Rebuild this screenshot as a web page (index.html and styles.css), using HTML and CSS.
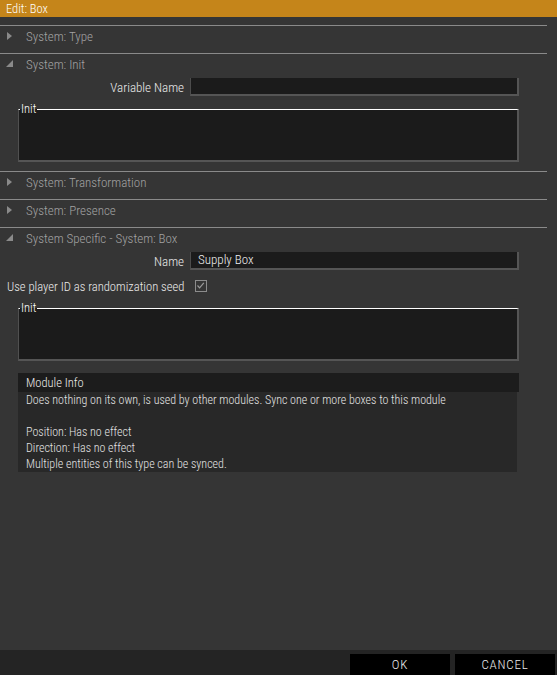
FILE: index.html
```html
<!DOCTYPE html>
<html>
<head>
<meta charset="utf-8">
<link rel="stylesheet" href="styles.css">
</head>
<body>
<div class="dialog">
  <div class="titlebar">Edit: Box</div>
  <div class="content">
    <section class="section">
      <div class="sec-head"><span class="tri tri-closed"></span><span class="sec-title">System: Type</span></div>
    </section>
    <section class="section">
      <div class="sec-head"><span class="tri tri-open"></span><span class="sec-title">System: Init</span></div>
      <div class="field-row">
        <label class="field-label">Variable Name</label>
        <div class="input"></div>
      </div>
      <fieldset class="codebox"><legend>Init</legend><div class="codebox-inner"></div></fieldset>
    </section>
    <section class="section">
      <div class="sec-head"><span class="tri tri-closed"></span><span class="sec-title">System: Transformation</span></div>
    </section>
    <section class="section">
      <div class="sec-head"><span class="tri tri-closed"></span><span class="sec-title">System: Presence</span></div>
    </section>
    <section class="section section-last">
      <div class="sec-head"><span class="tri tri-open"></span><span class="sec-title">System Specific - System: Box</span></div>
      <div class="field-row">
        <label class="field-label">Name</label>
        <div class="input">Supply Box</div>
      </div>
      <div class="check-row">
        <label class="check-label">Use player ID as randomization seed</label>
        <span class="checkbox"><svg width="11" height="11" viewBox="0 0 11 11"><path d="M2.5 5.5 L4.6 7.8 L8.8 2.8" fill="none" stroke="#9a9a9a" stroke-width="1.2"/></svg></span>
      </div>
      <fieldset class="codebox codebox-2"><legend>Init</legend><div class="codebox-inner"></div></fieldset>
      <div class="module-info">
        <div class="mi-head">Module Info</div>
        <div class="mi-body">
          <div>Does nothing on its own, is used by other modules. Sync one or more boxes to this module</div>
          <div>&nbsp;</div>
          <div>Position: Has no effect</div>
          <div>Direction: Has no effect</div>
          <div>Multiple entities of this type can be synced.</div>
        </div>
      </div>
    </section>
  </div>
  <div class="bottombar">
    <button class="btn">OK</button>
    <button class="btn">CANCEL</button>
  </div>
</div>
</body>
</html>
```
FILE: styles.css
```css
html, body {
  margin: 0;
  padding: 0;
}
body {
  background: #353535;
  font-family: "Roboto Condensed", "Liberation Sans Narrow", "Roboto", sans-serif;
  font-weight: 300;
  font-size: 13px;
  color: #e6e6e6;
}
.dialog {
  display: flex;
  flex-direction: column;
  height: 675px;
  width: 557px;
}
.titlebar {
  height: 17px;
  line-height: 17px;
  background: #c5851a;
  color: #ffffff;
  padding-left: 6px;
  font-size: 12.5px;
  font-weight: 300;
}
.content {
  flex: 1;
  padding-top: 8px;
}
.section {
  width: 547px;
  border-top: 1px solid #8a8a8a;
  padding-bottom: 5px;
}
.sec-head {
  height: 20px;
  padding-bottom: 2px;
  display: flex;
  align-items: center;
}
.tri {
  width: 26px;
  height: 20px;
  position: relative;
  flex: none;
}
.tri-closed::before {
  content: "";
  position: absolute;
  left: 7px;
  top: 6px;
  border-left: 5px solid #8a8a8a;
  border-top: 4px solid transparent;
  border-bottom: 4px solid transparent;
}
.tri-open::before {
  content: "";
  position: absolute;
  left: 6px;
  top: 6px;
  border-bottom: 7px solid #8a8a8a;
  border-left: 7px solid transparent;
}
.sec-title {
  color: #a3a3a3;
  font-size: 13px;
}
.field-row {
  display: grid;
  grid-template-columns: 184px 329px;
  column-gap: 6px;
  margin-top: 2px;
  align-items: center;
}
.field-label {
  text-align: right;
  color: #ececec;
}
.input {
  height: 16px;
  line-height: 16px;
  background: #1b1b1b;
  border-left: 1px solid #4c4c4c;
  border-right: 2px solid #555555;
  border-bottom: 2px solid #555555;
  padding-left: 7px;
  color: #f0f0f0;
}
.codebox {
  margin: 6px 0 4px 18px;
  padding: 0;
  width: 498px;
  min-width: 0;
  background: #1b1b1b;
  border-top: 1px solid #ffffff;
  border-left: 1px solid #505050;
  border-right: 2px solid #555555;
  border-bottom: 2px solid #555555;
  box-sizing: content-box;
}
.codebox legend {
  padding: 0 1px;
  margin-left: 1px;
  font-size: 12.5px;
  line-height: 14px;
  color: #ffffff;
}
.codebox-inner {
  height: 44px;
}
.codebox-2 {
  margin-top: 4px;
}
.check-row {
  display: flex;
  align-items: center;
  height: 22px;
  margin-top: 5px;
}
.check-label {
  width: 177px;
  padding-left: 7px;
  color: #ececec;
  white-space: nowrap;
  font-size: 12.6px;
}
.checkbox {
  margin-left: 11px;
  width: 10px;
  height: 10px;
  border: 1px solid #8c8c8c;
  display: flex;
}
.checkbox svg {
  margin: -1px 0 0 -1px;
}
.module-info {
  margin: 12px 0 0 18px;
}
.mi-head {
  width: 493px;
  height: 19px;
  line-height: 19px;
  background: #1c1c1c;
  padding-left: 8px;
  color: #ececec;
  font-size: 12.5px;
}
.mi-body {
  width: 491px;
  background: #282828;
  padding-left: 8px;
  font-size: 12px;
  line-height: 16px;
  color: #e4e4e4;
}
.bottombar {
  height: 25px;
  background: #242424;
  display: flex;
  justify-content: flex-end;
  align-items: flex-end;
  gap: 5px;
  padding-right: 2px;
}
.btn {
  width: 100px;
  height: 21px;
  background: #000000;
  color: #ececec;
  border: none;
  font-family: "Roboto Condensed", "Roboto", sans-serif;
  font-weight: 300;
  font-size: 13px;
  letter-spacing: 0.8px;
  padding: 0;
}
```
